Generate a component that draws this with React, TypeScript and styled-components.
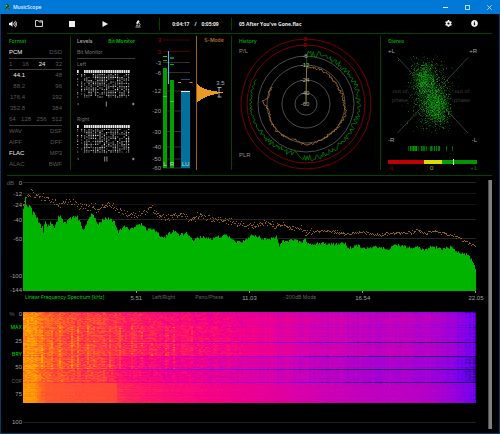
import React from "react";
import styled, { createGlobalStyle, css } from "styled-components";
import { FaVolumeUp, FaCog, FaInfoCircle } from "react-icons/fa";

const GlobalStyle = createGlobalStyle`
  * { box-sizing: border-box; }
  body { margin: 0; background: #000; }
  button { background: none; border: 0; padding: 0; margin: 0; font: inherit; color: inherit; cursor: pointer; }
`;

/* ---------- data helpers ---------- */

type Point = [number, number];

function createRandom(seed: number) {
  let s = seed;
  return () => {
    s = (s * 1664525 + 1013904223) % 4294967296;
    return s / 4294967296;
  };
}

function sample(points: Point[], x: number) {
  for (let i = 1; i < points.length; i++) {
    if (x <= points[i][0]) {
      const [x0, y0] = points[i - 1];
      const [x1, y1] = points[i];
      return y0 + ((y1 - y0) * (x - x0)) / (x1 - x0);
    }
  }
  return points[points.length - 1][1];
}

/* ---------- window ---------- */

const wording = css`
  font-family: Inter, "Liberation Sans", sans-serif;
  font-size: 5px;
`;

const Window = styled.div`
  display: flex;
  flex-direction: column;
  min-height: 100vh;
  background: #000;
  border: 1px solid #003c6c;
  border-top: 0;
  color: #8c8c8c;
  font-family: "Liberation Sans", Arial, sans-serif;
  font-size: 6px;
  line-height: 8px;
`;

const TitleBar = styled.header`
  display: flex;
  align-items: center;
  height: 14px;
  margin: 0 -1px;
  padding: 0 6px 0 4px;
  gap: 2px;
  background: #0078d7;
  color: #e4f2fe;
  font-family: "Open Sans", "Noto Sans", sans-serif;
`;

const AppName = styled.h1`
  flex: 1;
  margin: 0;
  font-size: 5px;
  font-weight: 600;
`;

const WindowButton = styled.button`
  display: grid;
  place-items: center;
  width: 20px;
  height: 14px;

  &:last-child { margin-right: -5px; }
`;

const Toolbar = styled.div`
  display: flex;
  align-items: center;
  height: 20px;
  margin: 0 7px 0 6px;
  padding-right: 5px;
  border-bottom: 1px solid #004600;
  color: #f0f0f0;
`;

const Transport = styled.div`
  display: flex;
  width: 152px;
`;

const ToolButton = styled.button<{ $width: number }>`
  display: grid;
  place-items: center;
  width: ${(p) => p.$width}px;
  height: 18px;
`;

const ToolDivider = styled.span`
  width: 1px;
  height: 12px;
  background: #004600;
`;

const Readout = styled.div`
  width: 71px;
  display: flex;
  justify-content: center;
  gap: 5px;
  font-family: "Open Sans", "Noto Sans", sans-serif;
  font-size: 5px;
  font-weight: 700;
  color: #e8e8e8;
`;

const TrackName = styled.div`
  flex: 1;
  padding-left: 7px;
  white-space: nowrap;
  font-family: "Open Sans", "Noto Sans", sans-serif;
  font-size: 5px;
  font-weight: 700;
  color: #e8e8e8;
`;

/* ---------- panels ---------- */

const Panels = styled.section`
  display: grid;
  grid-template-columns: 64fr 69fr 92fr 149fr 111fr;
  margin: 0 7px 0 6px;
  padding: 2px 0 5px;
  border-bottom: 1px solid #004600;
`;

const Panel = styled.div<{ $divided?: boolean }>`
  min-width: 0;
  border-right: ${(p) => (p.$divided ? "1px solid #004600" : "0")};
`;

const Heading = styled.h2`
  ${wording}
  margin: 0;
  line-height: 11px;
  font-weight: 700;
  color: #009600;
`;

const FormatPanel = styled(Panel)`
  padding: 0 8px 0 2px;
`;

const FormatRow = styled.div<{ $rule?: boolean; $height?: number; $indent?: boolean }>`
  display: flex;
  justify-content: space-between;
  height: ${(p) => p.$height ?? 11}px;
  line-height: 11px;
  border-bottom: ${(p) => (p.$rule ? "1px solid #3c3c3c" : "0")};
  color: #585858;

  ${(p) =>
    p.$indent &&
    css`
      & > span:first-child { width: 16px; text-align: right; }
    `}
`;

const FormatValue = styled.span<{ $on?: boolean }>`
  color: ${(p) => (p.$on ? "#f0f0f0" : "inherit")};
`;

const LevelsPanel = styled(Panel)`
  padding: 0 5px 0 6px;
`;

const LevelsRow = styled.div<{ $rule?: boolean }>`
  ${wording}
  display: flex;
  justify-content: space-between;
  height: ${(p) => (p.$rule ? 12 : 11)}px;
  line-height: 11px;
  border-bottom: ${(p) => (p.$rule ? "1px solid #3c3c3c" : "0")};
  color: #747474;
`;

const TabButton = styled.button<{ $active?: boolean }>`
  color: ${(p) => (p.$active ? "#00a800" : "#b0b0b0")};
  font-weight: ${(p) => (p.$active ? 700 : 500)};
  white-space: nowrap;
`;

const Channel = styled.div`
  margin-bottom: 5px;
`;

const BlockSvg = styled.svg`
  display: block;
  width: 100%;
`;

const MeterPanel = styled(Panel)`
  display: grid;
  grid-template-columns: 56fr 35fr;
`;

const SModePanel = styled.div`
  border-left: 1px solid #9c6010;
`;

const SModeButton = styled.button`
  ${wording}
  display: block;
  width: 100%;
  height: 9px;
  line-height: 9px;
  font-weight: 600;
  color: #b07020;
`;

const HistoryPanel = styled(Panel)`
  display: grid;

  & > * { grid-area: 1 / 1; }
`;

const HistoryLabels = styled.div`
  display: flex;
  flex-direction: column;
  justify-content: space-between;
  padding: 0 0 11px 7px;
  color: #8c8c8c;
`;

const StereoPanel = styled(Panel)`
  padding: 0 15px 0 7px;
`;

const CorrelationBar = styled.div`
  display: grid;
  grid-template-columns: 36fr 17fr 11fr 1fr 23fr;
  height: 4px;
  align-items: center;
`;

const CorrelationPart = styled.span<{ $color: string; $tall?: boolean }>`
  height: ${(p) => (p.$tall ? 6 : 4)}px;
  background: ${(p) => p.$color};
`;

const CorrelationScale = styled.div`
  display: flex;
  justify-content: space-between;
  height: 7px;
  line-height: 10px;
`;

const ScaleValue = styled.span<{ $color: string }>`
  color: ${(p) => p.$color};
`;

/* ---------- analysis area ---------- */

const Analysis = styled.main`
  display: flex;
  flex: 1;
  padding: 4px 7px 4px 0;
`;

const Charts = styled.div`
  flex: 1;
  min-width: 0;
`;

const ScrollTrack = styled.div`
  width: 4px;
  margin-left: 12px;
  background: #808080;
  border-left: 1px solid #505050;
`;

const ChartRow = styled.div`
  display: grid;
  grid-template-columns: 22px 1fr;
`;

const AxisSvg = styled.svg`
  display: block;
  width: 22px;
  height: 114px;
`;

const PlotSvg = styled.svg<{ $height: number }>`
  display: block;
  width: 100%;
  height: ${(p) => p.$height}px;
`;

const FrequencyAxis = styled.div`
  display: grid;
  grid-template-columns: repeat(4, 1fr);
  height: 18px;
  margin-left: 22px;
  line-height: 6px;
`;

const FrequencyCell = styled.div`
  display: flex;
  align-items: flex-start;
`;

const ModeButton = styled.button<{ $active?: boolean; $indent: number }>`
  ${wording}
  line-height: 6px;
  margin-left: ${(p) => p.$indent}px;
  white-space: nowrap;
  color: ${(p) => (p.$active ? "#00d000" : "#646464")};
`;

const FrequencyMark = styled.span`
  width: 16px;
  margin: 1px -8px 0 auto;
  text-align: center;
  color: #a0a0a0;
`;

const TimeAxis = styled.div`
  display: flex;
  flex-direction: column;
  justify-content: space-between;
  align-items: flex-end;
  height: 88px;
  padding-right: 1px;
  margin-top: -2px;
`;

const TimeMark = styled.span`
  display: flex;
  gap: 4px;
  color: #a0a0a0;
`;

const Unit = styled.span`
  color: #606060;
`;

const MarkButton = styled.button<{ $active?: boolean }>`
  ${wording}
  font-weight: 500;
  color: ${(p) => (p.$active ? "#00c800" : "#5c5c5c")};
`;

const EndRow = styled.div`
  display: grid;
  grid-template-columns: 21px 1fr;
  align-items: center;
  gap: 1px;
  margin-top: 15px;
  color: #a0a0a0;
  text-align: right;
`;

const EndRule = styled.span`
  height: 1px;
  background: #202020;
`;

/* ---------- bit monitor ---------- */

function BitMonitor({ name, seed, marks }: { name: string; seed: number; marks: number }) {
  const random = createRandom(seed);
  const cells: React.ReactNode[] = [];
  const columns = [0, 4, ...Array.from({ length: 21 }, (_, i) => 7 + i * 2.2)];
  columns.forEach((x, c) => {
    if (c !== 1) cells.push(<rect key={`t${c}`} x={x} y={0} width={1.7} height={3} fill="#e8e8e8" />);
    for (let r = 0; r < 16; r++) {
      const v = random();
      const limit = c === 0 ? 0.4 : 0.74;
      if (v < limit && !(c === 1 && r > 13)) {
        const tone = Math.round(90 + random() * 140);
        cells.push(
          <rect key={`${c}-${r}`} x={x} y={4 + r * 1.5} width={1.2} height={1} fill={`rgb(${tone},${tone},${tone})`} />
        );
      }
    }
  });
  return (
    <Channel>
      <LevelsRow>{name}</LevelsRow>
      <BlockSvg viewBox="0 0 58 28" height={28} preserveAspectRatio="none" role="img" aria-label={`${name} bit activity`}>
        {cells}
      </BlockSvg>
      <BlockSvg viewBox="0 0 58 11" height={11} preserveAspectRatio="none" stroke="#b4b4b4" strokeWidth={0.8} aria-hidden="true">
        <path d="M0.5 6h1.5M55 6h2.6M56.3 4.7v2.6" />
        <path d={marks === 1 ? "M29.3 3.5v5" : "M27.7 3.5v5M29.9 3.5v5"} />
      </BlockSvg>
    </Channel>
  );
}

/* ---------- level meter ---------- */

const METER_SCALE: [string, number, string][] = [
  ["3", 4, "#b40000"],
  ["0", 15.5, "#b40000"],
  ["-3", 26.5, "#a0a0a0"],
  ["-6", 36.5, "#a0a0a0"],
  ["-12", 55, "#a0a0a0"],
  ["-20", 75, "#a0a0a0"],
  ["-30", 95.5, "#a0a0a0"],
  ["-40", 111, "#a0a0a0"],
  ["-50", 123, "#a0a0a0"],
  ["-60", 132, "#a0a0a0"],
];

function LevelMeter() {
  return (
    <BlockSvg viewBox="0 0 56 134" height={134} role="img" aria-label="Level meter">
      {METER_SCALE.map(([label, y, color], i) => (
        <React.Fragment key={label}>
          <rect x={23} y={y - 0.5} width={27} height={1} fill={i < 2 ? "#480000" : "#303030"} />
          <text x={21} y={y + 2} fontSize={6} textAnchor="end" fill={color}>{label}</text>
        </React.Fragment>
      ))}
      <rect x={23} y={32} width={4} height={100} fill="#00a000" />
      <rect x={23} y={60} width={4} height={1} fill="#00f000" />
      <rect x={23} y={20} width={4} height={1} fill="#00c878" />
      <rect x={23} y={24} width={4} height={1} fill="#00b400" />
      <rect x={30} y={44} width={4} height={88} fill="#00a000" />
      <rect x={30} y={65} width={4} height={1} fill="#00f000" />
      <rect x={30} y={21} width={4} height={2} fill="#007850" />
      <rect x={30} y={28} width={4} height={1} fill="#00b400" />
      <rect x={28} y={15} width={1} height={33} fill="#3cc8f0" />
      <rect x={41} y={55} width={9} height={77} fill="#00709c" />
      <rect x={41} y={55} width={9} height={1} fill="#e8f4fa" />
      <rect x={41} y={43} width={9} height={1} fill="#005a80" />
      <path d="M38 46.5h3M49.5 46.5h3" stroke="#d08820" />
      <g fontSize={6} textAnchor="middle" fill="#c8dcc8">
        <text x={25} y={130}>L</text>
        <text x={32} y={130}>R</text>
        <text x={45.5} y={130}>LU</text>
      </g>
    </BlockSvg>
  );
}

function LoudnessSpread() {
  const widths = [1, 2, 3, 5, 7, 10, 14, 20, 26, 21, 17, 13, 10, 8, 6, 4, 3, 1];
  return (
    <BlockSvg viewBox="0 0 34 125" height={125} role="img" aria-label="Loudness distribution">
      {widths.map((w, i) => (
        <rect key={i} x={0} y={39 + i} width={w} height={1} fill="#e89a24" shapeRendering="crispEdges" />
      ))}
      <path d="M22 42.5v9.5M20.5 42.5h4M20.5 52h4" stroke="#c8c8c8" strokeWidth={0.8} fill="none" />
      <text x={23.5} y={40} fontSize={6} textAnchor="middle" fill="#b0b0b0">3.5</text>
    </BlockSvg>
  );
}

/* ---------- history ---------- */

const GREEN_RADIUS: Point[] = [[0, 50], [25, 51], [45, 52], [80, 53], [110, 52], [140, 53], [175, 54], [200, 51], [230, 53], [260, 55], [297, 56]];
const AMBER_RADIUS: Point[] = [[0, 37], [35, 37], [60, 36], [90, 38], [105, 41], [140, 38], [180, 41], [200, 37], [225, 40], [255, 38], [265, 39], [274, 43], [281, 38], [297, 39]];

function polarTrace(radius: Point[], noise: (a: number) => number, seed: number) {
  const random = createRandom(seed);
  let path = "M74 68";
  for (let a = 1; a <= 297; a += 1.4) {
    const r = sample(radius, a) + (random() - 0.5) * noise(a);
    const t = (a * Math.PI) / 180;
    path += `L${(74 + r * Math.sin(t)).toFixed(1)} ${(68 - r * Math.cos(t)).toFixed(1)}`;
  }
  return path;
}

const HISTORY_RINGS: [string, number, boolean][] = [
  ["3", 65, true],
  ["0", 59, true],
  ["-6", 48, false],
  ["-12", 39, false],
  ["-24", 24, false],
  ["-40", 11, false],
  ["-60", 0, false],
];

function HistoryDial() {
  return (
    <BlockSvg viewBox="0 0 148 134" height={134} role="img" aria-label="Peak and loudness history">
      <g fill="none" strokeWidth={1}>
        {HISTORY_RINGS.map(([label, r, hot]) => (
          <circle key={label} cx={74} cy={68} r={r} stroke={hot ? "#780000" : "#4c4c4c"} />
        ))}
        <path d={polarTrace(GREEN_RADIUS, (a) => (a < 22 ? 7 : a < 240 ? 6 : 2.5), 7)} stroke="#008400" strokeWidth={0.8} />
        <path d={polarTrace(AMBER_RADIUS, () => 2.6, 21)} stroke="#b87820" strokeWidth={0.8} />
      </g>
      {HISTORY_RINGS.map(([label, r, hot]) => (
        <text key={label} x={73} y={70 - r} fontSize={6} textAnchor="middle" fill={hot ? "#c80000" : "#b4b4b4"}>{label}</text>
      ))}
    </BlockSvg>
  );
}

/* ---------- stereo ---------- */

function StereoScope() {
  const random = createRandom(99);
  const gauss = () => random() + random() + random() + random() - 2;
  const lobes: [number, number, number, number, number][] = [
    [36, 31, 9, 14, 800],
    [48, 60, 10, 15, 1000],
    [43, 47, 17, 26, 1500],
  ];
  const dots = lobes.flatMap(([cx, cy, sx, sy, n]) =>
    Array.from({ length: n }, () => {
      const gx = gauss();
      const gy = gauss();
      return [cx + gx * sx + gy * 2, cy + gy * sy, random()];
    })
  );
  return (
    <BlockSvg viewBox="0 0 89 112" height={112} role="img" aria-label="Stereo phase scope" fontSize={6}>
      <path d="M9.5 10.5L80 86M80 10.5L9.5 86" stroke="#383838" />
      <g fill="#a8a8a8">
        <text x={0} y={6}>+L</text>
        <text x={89} y={6} textAnchor="end">+R</text>
        <text x={0} y={95}>-R</text>
        <text x={89} y={95} textAnchor="end">-L</text>
      </g>
      <g fill="#383838" textAnchor="middle">
        <text x={12} y={46}>out of</text>
        <text x={12} y={55}>phase</text>
        <text x={74} y={46}>out of</text>
        <text x={74} y={55}>phase</text>
      </g>
      <g shapeRendering="crispEdges">
        {dots.map(([x, y, v], i) => (
          <rect key={i} x={Math.round(x)} y={Math.round(y)} width={1} height={1} fill={v > 0.85 ? "#30b830" : "#008c00"} opacity={Number((0.15 + v * 0.4).toFixed(2))} />
        ))}
      </g>
      {Array.from({ length: 32 }, (_, i) => (
        <rect key={i} x={20 + i} y={99} width={1} height={5} fill="#00b400" opacity={random() > 0.25 ? 0.4 + random() * 0.5 : 0.1} />
      ))}
      <path d="M58.5 99v5M64.5 99v5" stroke="#006400" />
    </BlockSvg>
  );
}

/* ---------- spectrum ---------- */

const LEVELS: Point[] = [
  [0, 30], [2, 18], [3, 23], [5, 28], [6, 25], [9, 33], [12, 35], [15, 41], [18, 46], [20, 50], [22, 40], [24, 46], [27, 42],
  [30, 47], [32, 46], [34, 39], [36, 35], [39, 40], [43, 43], [48, 38], [54, 38], [57, 43], [60, 50], [63, 45], [66, 36],
  [69, 34], [71, 38], [75, 44], [80, 39], [85, 38], [91, 42], [95, 52], [101, 46], [106, 50], [113, 46], [118, 44], [124, 50],
  [130, 49], [136, 55], [140, 58], [145, 54], [150, 51], [156, 55], [163, 53], [170, 60], [178, 57], [188, 59], [194, 57],
  [203, 55], [212, 62], [220, 61], [228, 55], [233, 56], [240, 59], [246, 59], [253, 57], [256, 67], [259, 61], [265, 61],
  [271, 59], [278, 63], [281, 58], [286, 65], [296, 63], [303, 64], [313, 64], [320, 62], [326, 68], [333, 65], [340, 68],
  [350, 67], [360, 68], [366, 70], [370, 64], [378, 66], [388, 68], [393, 67], [400, 70], [408, 66], [418, 69], [428, 67],
  [433, 72], [441, 74], [446, 76], [450, 83], [452, 88], [453, 89],
];

const PEAKS: Point[] = [
  [0, 25], [4, 13], [8, 10], [12, 14], [18, 16], [26, 19], [34, 24], [42, 21], [50, 21], [58, 26], [68, 27], [78, 26], [86, 23],
  [93, 28], [100, 32], [108, 34], [114, 35], [123, 30], [129, 27], [135, 35], [145, 37], [156, 33], [166, 39], [178, 35],
  [188, 38], [198, 39], [210, 41], [223, 45], [233, 44], [246, 42], [252, 47], [260, 43], [266, 48], [275, 46], [283, 51],
  [303, 50], [323, 53], [338, 52], [358, 54], [368, 52], [388, 52], [393, 49], [403, 53], [408, 50], [423, 53], [433, 56],
  [443, 61], [453, 66],
];

const DB_SCALE: [string, number][] = [["0", 3], ["-12", 14], ["-24", 25], ["-40", 40], ["-60", 59], ["-100", 96], ["-144", 110]];

function Spectrum() {
  const random = createRandom(5);
  let area = "M0 111";
  for (let x = 0; x < 453; x++) {
    const y = sample(LEVELS, x) + (random() - 0.5) * (x < 60 ? 5 : 3);
    area += `V${y.toFixed(1)}H${x + 1}`;
  }
  area += "V111Z";
  const dots: React.ReactNode[] = [];
  for (let x = 0; x < 453; x++) {
    const spread = x < 200 ? 5 : x < 290 ? 4 : 2;
    for (let k = 0; k < 2; k++) {
      const y = Math.round(sample(PEAKS, x) + (random() + random() - 1) * spread + 0.5);
      if (k === 0 || random() > 0.7) dots.push(<rect key={`${x}-${k}`} x={x} y={y} width={1} height={1} />);
    }
  }
  return (
    <PlotSvg $height={114} viewBox="0 0 453 114" preserveAspectRatio="none" role="img" aria-label="Linear frequency spectrum">
      {DB_SCALE.slice(0, 5).map(([label, y], i) => (
        <rect key={label} x={0} y={y - 1} width={453} height={1} fill={i === 1 || i === 2 ? "#141414" : "#242424"} />
      ))}
      <path d={area} fill="#00b400" />
      <g fill="#906010">{dots}</g>
      <path d="M113.5 111v2M226.5 111v2M339.5 111v2M452.5 111v2" stroke="#909090" />
    </PlotSvg>
  );
}

/* ---------- spectrogram ---------- */

const STOPS: [number, number[]][] = [
  [0, [30, 0, 110]],
  [0.14, [110, 0, 240]],
  [0.28, [165, 0, 212]],
  [0.42, [210, 0, 175]],
  [0.55, [245, 0, 135]],
  [0.68, [255, 30, 90]],
  [0.82, [255, 95, 35]],
  [1, [255, 175, 0]],
];

function heat(v: number) {
  for (let i = 1; i < STOPS.length; i++) {
    if (v <= STOPS[i][0]) {
      const [v0, c0] = STOPS[i - 1];
      const [v1, c1] = STOPS[i];
      const f = (v - v0) / (v1 - v0);
      return `rgb(${c0.map((c, k) => Math.round(c + (c1[k] - c) * f)).join(",")})`;
    }
  }
  return "rgb(255,175,0)";
}

const ENERGY: Point[] = [[0, 0.95], [11, 0.95], [18, 0.83], [50, 0.77], [90, 0.72], [125, 0.64], [180, 0.57], [226, 0.52], [260, 0.47], [300, 0.41], [340, 0.37], [390, 0.35], [415, 0.31], [432, 0.24], [442, 0.2], [450, 0.16], [453, 0.05]];
const STRIPES = [18, 28, 36, 48, 54, 64, 70, 86, 96, 108, 118, 128, 143, 150, 168];

function Spectrogram() {
  const random = createRandom(42);
  const shades = 48;
  const paths: string[] = Array(shades + 1).fill("");
  const columnTone = Array.from({ length: 227 }, () => (random() - 0.5) * 0.05);
  for (let row = 0; row < 91; row++) {
    const rowTone = (random() - 0.5) * 0.05;
    const dark = [0, 30, 44, 57, 70].includes(row);
    for (let col = 0; col < 227; col++) {
      const x = col * 2;
      const width = Math.min(2, 453 - x);
      let v = sample(ENERGY, x) + rowTone + columnTone[col] * (row < 71 ? 1 : 0.2);
      v += (random() - 0.5) * (x < 220 && row < 70 ? 0.13 : 0.05);
      if (STRIPES.some((s) => Math.abs(s - x) < 2) && row > 13 && row < 57) v += random() * 0.13;
      if (row > 70 && x > 20 && x < 94) v += (0.79 - v) * 0.7;
      if (row > 44 && row < 70 && x > 90) v -= 0.06;
      if (row >= 14 && row < 43 && x > 90 && x < 250) v += 0.02;
      if (row === 15 && x > 200) v -= 0.1;
      if (dark) v -= row === 0 ? 0.12 : 0.06 + 0.25 * Math.min(1, Math.max(0, (x - 70) / (row === 57 ? 90 : 220)));
      const shade = Math.round(Math.max(0, Math.min(1, v)) * shades);
      paths[shade] += `M${x} ${row}h${width}v1h-${width}z`;
    }
  }
  return (
    <PlotSvg $height={91} viewBox="0 0 453 91" preserveAspectRatio="none" shapeRendering="crispEdges" role="img" aria-label="Spectrogram">
      {paths.map((d, i) => d && <path key={i} d={d} fill={heat(i / shades)} />)}
    </PlotSvg>
  );
}

/* ---------- icons ---------- */

const Logo = () => (
  <svg width="7" height="8" viewBox="0 0 14 16" aria-hidden="true">
    <ellipse cx="7" cy="8" rx="6.5" ry="7" fill="#1c7f82" />
    <path d="M5 2.5c3 0 4 2 3 4l-3 4M8 6l3 7M3 11l4-4" stroke="#0a2f38" strokeWidth="2" fill="none" />
    <path d="M4 4l2 2M9 9l2 1" stroke="#8fe0a0" strokeWidth="1.4" />
  </svg>
);

const FolderIcon = () => (
  <svg width="8" height="7" viewBox="0 0 16 14" fill="none" stroke="currentColor" strokeWidth="1.7" aria-hidden="true">
    <path d="M1 13V1h5.5l2 3H15v9z" />
    <path d="M9 1.5h6V4" />
  </svg>
);

const StopIcon = () => (
  <svg width="6" height="6" aria-hidden="true"><rect width="6" height="6" fill="currentColor" /></svg>
);

const PlayIcon = () => (
  <svg width="6" height="6" viewBox="0 0 6 6" aria-hidden="true"><path d="M0.5 0L6 3L0.5 6z" fill="currentColor" /></svg>
);

const ScopeIcon = () => (
  <svg width="6" height="8" viewBox="0 0 12 16" fill="none" stroke="currentColor" strokeWidth="1.5" aria-hidden="true">
    <path d="M6 1l2.5 2L5 8 3 6.5z" fill="currentColor" />
    <path d="M8 6c3 1.5 2.5 4.5 0 6M2 10.5h5M1 14h10" />
  </svg>
);

export default function App() {
  return (
    <>
      <GlobalStyle />
      <Window>
        <TitleBar>
          <Logo />
          <AppName>MusicScope</AppName>
          <WindowButton aria-label="Minimize">
            <svg width="5" height="5"><path d="M0 2.5h5" stroke="#d8ebfb" /></svg>
          </WindowButton>
          <WindowButton aria-label="Maximize">
            <svg width="5" height="5"><rect x="0.5" y="0.5" width="4" height="4" fill="none" stroke="#b8daf6" /></svg>
          </WindowButton>
          <WindowButton aria-label="Close">
            <svg width="5" height="5"><path d="M0.3 0.3l4.4 4.4M4.7 0.3L0.3 4.7" stroke="#d8ebfb" strokeWidth="0.8" /></svg>
          </WindowButton>
        </TitleBar>

        <Toolbar>
          <Transport>
            <ToolButton $width={12} aria-label="Volume"><FaVolumeUp size={8} /></ToolButton>
            <ToolButton $width={40} aria-label="Open"><FolderIcon /></ToolButton>
            <ToolButton $width={26} aria-label="Stop"><StopIcon /></ToolButton>
            <ToolButton $width={40} aria-label="Play"><PlayIcon /></ToolButton>
            <ToolButton $width={26} aria-label="Analyze"><ScopeIcon /></ToolButton>
          </Transport>
          <ToolDivider />
          <Readout><span>0:04:17</span><span>/</span><span>0:05:09</span></Readout>
          <ToolDivider />
          <TrackName>05 After You've Gone.flac</TrackName>
          <ToolButton $width={26} aria-label="Settings"><FaCog size={7} /></ToolButton>
          <ToolButton $width={26} aria-label="Info"><FaInfoCircle size={7} /></ToolButton>
        </Toolbar>

        <Panels>
          <FormatPanel $divided>
            <Heading>Format</Heading>
            <FormatRow $rule $height={12}><FormatValue $on>PCM</FormatValue><FormatValue>DSD</FormatValue></FormatRow>
            <FormatRow $rule>
              <FormatValue>1</FormatValue><FormatValue>16</FormatValue><FormatValue $on>24</FormatValue><FormatValue>32</FormatValue>
            </FormatRow>
            <FormatRow $indent><FormatValue $on>44.1</FormatValue><FormatValue>48</FormatValue></FormatRow>
            <FormatRow $indent><FormatValue>88.2</FormatValue><FormatValue>96</FormatValue></FormatRow>
            <FormatRow $indent><FormatValue>176.4</FormatValue><FormatValue>192</FormatValue></FormatRow>
            <FormatRow $indent><FormatValue>352.8</FormatValue><FormatValue>384</FormatValue></FormatRow>
            <FormatRow $rule $height={12}>
              <FormatValue>64</FormatValue><FormatValue>128</FormatValue><FormatValue>256</FormatValue><FormatValue>512</FormatValue>
            </FormatRow>
            <FormatRow><FormatValue>WAV</FormatValue><FormatValue>DSF</FormatValue></FormatRow>
            <FormatRow><FormatValue>AIFF</FormatValue><FormatValue>DFF</FormatValue></FormatRow>
            <FormatRow><FormatValue $on>FLAC</FormatValue><FormatValue>MP3</FormatValue></FormatRow>
            <FormatRow><FormatValue>ALAC</FormatValue><FormatValue>BWF</FormatValue></FormatRow>
          </FormatPanel>

          <LevelsPanel>
            <LevelsRow><TabButton>Levels</TabButton><TabButton $active>Bit Monitor</TabButton></LevelsRow>
            <LevelsRow $rule>Bit Monitor</LevelsRow>
            <BitMonitor name="Left" seed={3} marks={1} />
            <BitMonitor name="Right" seed={11} marks={2} />
          </LevelsPanel>

          <MeterPanel $divided>
            <LevelMeter />
            <SModePanel>
              <SModeButton>S-Mode</SModeButton>
              <LoudnessSpread />
            </SModePanel>
          </MeterPanel>

          <HistoryPanel $divided>
            <HistoryDial />
            <HistoryLabels>
              <div><Heading>History</Heading><div>P/L</div></div>
              <div>PLR</div>
            </HistoryLabels>
          </HistoryPanel>

          <StereoPanel>
            <Heading>Stereo</Heading>
            <StereoScope />
            <CorrelationBar>
              <CorrelationPart $color="#c00000" />
              <CorrelationPart $color="#dcdc00" />
              <CorrelationPart $color="#00a000" />
              <CorrelationPart $color="#d8f0d8" $tall />
              <CorrelationPart $color="#009600" />
            </CorrelationBar>
            <CorrelationScale>
              <ScaleValue $color="#a00000">-1</ScaleValue>
              <ScaleValue $color="#b4b400">0</ScaleValue>
              <ScaleValue $color="#007800">+1</ScaleValue>
            </CorrelationScale>
          </StereoPanel>
        </Panels>

        <Analysis>
          <Charts>
            <ChartRow>
              <AxisSvg viewBox="0 0 22 114" fontSize={6} textAnchor="end" fill="#a0a0a0" aria-hidden="true">
                <text x={13} y={5} fill="#606060">dB</text>
                {DB_SCALE.map(([label, y]) => <text key={label} x={21} y={y + 2}>{label}</text>)}
              </AxisSvg>
              <Spectrum />
            </ChartRow>
            <FrequencyAxis>
              <FrequencyCell>
                <ModeButton $active $indent={2}>Linear Frequency Spectrum [kHz]</ModeButton>
                <FrequencyMark>5.51</FrequencyMark>
              </FrequencyCell>
              <FrequencyCell>
                <ModeButton $indent={16}>Left/Right</ModeButton>
                <ModeButton $indent={20}>Pano/Phase</ModeButton>
                <FrequencyMark>11.03</FrequencyMark>
              </FrequencyCell>
              <FrequencyCell>
                <ModeButton $indent={34}>-200dB Mode</ModeButton>
                <FrequencyMark>16.54</FrequencyMark>
              </FrequencyCell>
              <FrequencyCell><FrequencyMark>22.05</FrequencyMark></FrequencyCell>
            </FrequencyAxis>
            <ChartRow>
              <TimeAxis>
                <TimeMark><Unit>%</Unit>0</TimeMark>
                <MarkButton $active>MAX</MarkButton>
                <TimeMark>25</TimeMark>
                <MarkButton $active>BRY</MarkButton>
                <TimeMark>50</TimeMark>
                <MarkButton>COF</MarkButton>
                <TimeMark>75</TimeMark>
              </TimeAxis>
              <Spectrogram />
            </ChartRow>
            <EndRow><span>100</span><EndRule /></EndRow>
          </Charts>
          <ScrollTrack />
        </Analysis>
      </Window>
    </>
  );
}
